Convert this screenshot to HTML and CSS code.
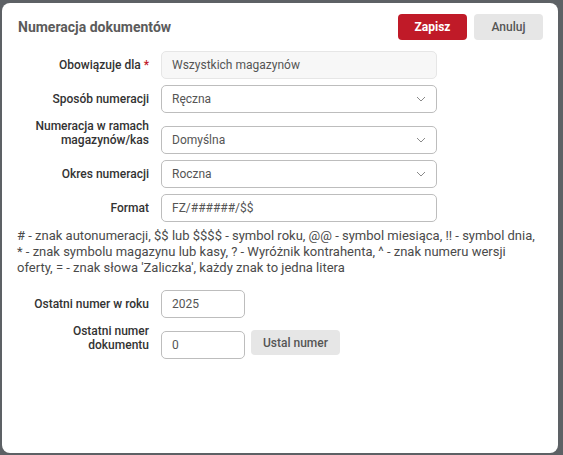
FILE: index.html
```html
<!DOCTYPE html>
<html lang="pl">
<head>
<meta charset="utf-8">
<title>Numeracja dokumentów</title>
<link rel="stylesheet" href="styles.css">
</head>
<body>
<div class="dialog">
  <div class="header">
    <h1 class="title">Numeracja dokumentów</h1>
    <div class="actions">
      <button class="btn btn-primary">Zapisz</button>
      <button class="btn btn-secondary">Anuluj</button>
    </div>
  </div>
  <div class="form">
    <div class="row">
      <label class="label">Obowiązuje dla <span class="req">*</span></label>
      <div class="control"><div class="input disabled">Wszystkich magazynów</div></div>
    </div>
    <div class="row">
      <label class="label">Sposób numeracji</label>
      <div class="control"><div class="input select">Ręczna<svg class="chev" viewBox="0 0 10 6" width="10" height="6"><polyline points="1,1 5,5 9,1" /></svg></div></div>
    </div>
    <div class="row">
      <label class="label two">Numeracja w ramach<br>magazynów/kas</label>
      <div class="control"><div class="input select">Domyślna<svg class="chev" viewBox="0 0 10 6" width="10" height="6"><polyline points="1,1 5,5 9,1" /></svg></div></div>
    </div>
    <div class="row">
      <label class="label">Okres numeracji</label>
      <div class="control"><div class="input select">Roczna<svg class="chev" viewBox="0 0 10 6" width="10" height="6"><polyline points="1,1 5,5 9,1" /></svg></div></div>
    </div>
    <div class="row">
      <label class="label">Format</label>
      <div class="control"><div class="input">FZ/######/$$</div></div>
    </div>
  </div>
  <p class="hint"># - znak autonumeracji, $$ lub $$$$ - symbol roku, @@ - symbol miesiąca, !! - symbol dnia, * - znak symbolu magazynu lub kasy, ? - Wyróżnik kontrahenta, ^ - znak numeru wersji oferty, = - znak słowa 'Zaliczka', każdy znak to jedna litera</p>
  <div class="form form-bottom">
    <div class="row">
      <label class="label">Ostatni numer w roku</label>
      <div class="control"><div class="input short">2025</div></div>
    </div>
    <div class="row">
      <label class="label two">Ostatni numer<br>dokumentu</label>
      <div class="control group"><div class="input short">0</div><button class="btn btn-secondary btn-small">Ustal numer</button></div>
    </div>
  </div>
</div>
</body>
</html>
```
FILE: styles.css
```css
html, body {
  margin: 0;
  padding: 0;
  background: #5d6165;
  font-family: Roboto, "Liberation Sans", sans-serif;
}
body {
  width: 563px;
  height: 455px;
  overflow: hidden;
}
.dialog {
  box-sizing: border-box;
  margin: 3px 5px 0 2px;
  width: 556px;
  height: 450px;
  background: #fff;
  border-radius: 8px;
}
.header {
  display: flex;
  justify-content: space-between;
  align-items: center;
  padding: 11px 15px 0 16px;
  height: 26px;
}
.title {
  margin: 0;
  font-size: 14px;
  font-weight: 700;
  color: #5b5b5b;
}
.actions {
  display: flex;
  gap: 7px;
}
.btn {
  font-family: Roboto, "Liberation Sans", sans-serif;
  border: none;
  border-radius: 4px;
  height: 26px;
  width: 69px;
  font-size: 12px;
  font-weight: 700;
  cursor: pointer;
  padding: 0;
}
.btn-primary {
  background: #c01a28;
  color: #fff;
}
.btn-secondary {
  background: #e6e6e6;
  color: #555;
  font-weight: 500;
}
.form {
  display: flex;
  flex-direction: column;
  gap: 6px;
  margin-top: 11px;
}
.row {
  display: flex;
  align-items: flex-end;
  gap: 12px;
}
.label {
  width: 147px;
  flex: none;
  text-align: right;
  font-size: 12px;
  font-weight: 500;
  color: #333;
  line-height: 14px;
  padding-bottom: 7px;
}
.req {
  color: #c01a28;
}
.control {
  flex: none;
}
.input {
  box-sizing: border-box;
  width: 276px;
  height: 28px;
  border: 1px solid #bdbdbd;
  border-radius: 5px;
  padding: 0 10px;
  font-size: 12px;
  color: #555;
  line-height: 26px;
  display: flex;
  align-items: center;
  justify-content: space-between;
}
.input.disabled {
  background: #f7f7f7;
  border-color: #e6e6e6;
}
.chev {
  fill: none;
  stroke: #8a8a8a;
  stroke-width: 1;
}
.hint {
  margin: 6px 20px 0 15px;
  font-size: 13px;
  line-height: 16px;
  color: #4a4a4a;
}
.form-bottom {
  margin-top: 14px;
}
.input.short {
  width: 84px;
}
.group {
  display: flex;
  align-items: flex-start;
  gap: 6px;
}
.btn-small {
  width: 89px;
  height: 25px;
  margin-top: -1px;
  font-weight: 500;
}
```
